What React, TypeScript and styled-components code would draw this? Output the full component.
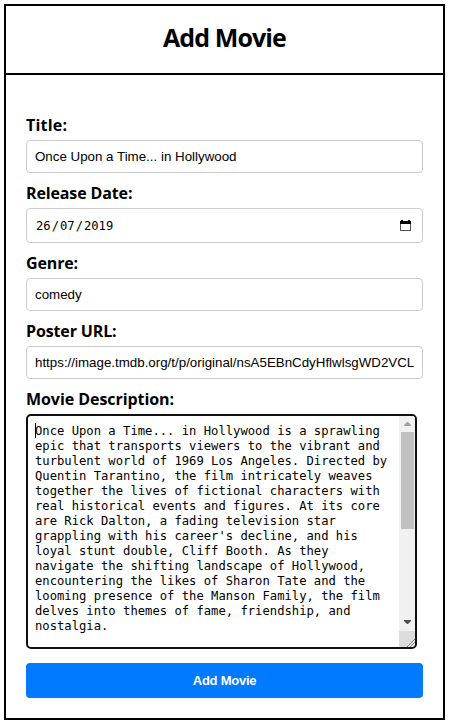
import React from "react";
import styled, { createGlobalStyle } from "styled-components";

const GlobalStyle = createGlobalStyle`
  * { box-sizing: border-box; }
  body { margin: 0; background: #fff; color: #000; }
`;

const Frame = styled.main`
  width: 441px;
  height: 716px;
  margin: 4px 0 0 4px;
  border: 2px solid #000;
`;

const Header = styled.header`
  height: 69px;
  border-bottom: 2px solid #000;
  display: flex;
  justify-content: center;
`;

const Heading = styled.h1`
  margin: 13px 0 0;
  font: 700 25px/36px "Open Sans", sans-serif;
  letter-spacing: -0.9px;
  white-space: nowrap;
`;

const Form = styled.form`
  display: flex;
  flex-direction: column;
  padding: 40px 20px 0;
`;

const Field = styled.div<{ $gap?: number }>`
  display: flex;
  flex-direction: column;
  margin-bottom: ${(p) => p.$gap ?? 10}px;
`;

const Label = styled.label<{ $tracking?: number }>`
  height: 25px;
  font: 700 16px/21px "Open Sans", sans-serif;
  letter-spacing: ${(p) => p.$tracking ?? -0.13}px;
  white-space: nowrap;
`;

const TextInput = styled.input`
  width: 100%;
  height: 33px;
  padding: 8px;
  border: 1px solid #ccc;
  border-radius: 4px;
  outline: none;
  font: 13.333px/15px "Liberation Sans", Arial, sans-serif;
  color: #000;
`;

const DateBox = styled.div`
  display: flex;
  align-items: center;
  justify-content: space-between;
  height: 35px;
  padding: 0 11px 0 8px;
  border: 1px solid #ccc;
  border-radius: 4px;
  font: 12.18px/15px "DejaVu Sans Mono", monospace;
`;

const DateParts = styled.div`
  display: flex;
  padding-top: 2px;
  span { padding: 0 1px; }
`;

const Editor = styled.div`
  display: flex;
  justify-content: space-between;
  width: 391px;
  height: 235px;
  border: 2px solid #101010;
  border-radius: 5px;
  overflow: hidden;
`;

const Description = styled.div`
  position: relative;
  padding: 8px 0 0 7px;
  font: 12.19px/15px "DejaVu Sans Mono", monospace;
  white-space: pre;
`;

const Caret = styled.i`
  position: absolute;
  left: 7px;
  top: 7px;
  width: 1px;
  height: 15px;
  background: #000;
`;

const Scrollbar = styled.div`
  display: flex;
  flex-direction: column;
  width: 16px;
  background: #f1f1f1;
`;

const Thumb = styled.div`
  width: 13px;
  height: 97px;
  margin-left: 2px;
  background: #c1c1c1;
`;

const Corner = styled.div`
  height: 16px;
  background: #dcdcdc;
`;

const Spacer = styled.div`
  flex: 1;
`;

const Glyph = styled.svg`
  display: block;
  flex: none;
`;

const Submit = styled.button`
  height: 35px;
  padding: 0;
  border: 0;
  border-radius: 4px;
  background: #007bff;
  color: #fff;
  font: bold 13px/15px "Liberation Sans", Arial, sans-serif;
  letter-spacing: -0.25px;
`;

const description = [
  "Once Upon a Time... in Hollywood is a sprawling",
  "epic that transports viewers to the vibrant and",
  "turbulent world of 1969 Los Angeles. Directed by",
  "Quentin Tarantino, the film intricately weaves",
  "together the lives of fictional characters with",
  "real historical events and figures. At its core",
  "are Rick Dalton, a fading television star",
  "grappling with his career's decline, and his",
  "loyal stunt double, Cliff Booth. As they",
  "navigate the shifting landscape of Hollywood,",
  "encountering the likes of Sharon Tate and the",
  "looming presence of the Manson Family, the film",
  "delves into themes of fame, friendship, and",
  "nostalgia.",
].join("\n");

const CalendarIcon = () => (
  <Glyph width="11" height="12" viewBox="0 0 11 12" shapeRendering="crispEdges">
    <path d="M0 1h11v3H0zM1 0h2v1H1zM8 0h2v1H8z" fill="#000" />
    <path d="M.5 3.5v7h10v-7" fill="none" stroke="#555" />
  </Glyph>
);

const Arrow = ({ down = false }: { down?: boolean }) => (
  <Glyph width="16" height="16" viewBox="0 0 16 16">
    {down ? (
      <path d="M5 5h7v1l-3 3h-1l-3-3z" fill="#505050" />
    ) : (
      <path d="M5 10v-1l3-3h1l3 3v1z" fill="#a3a3a3" />
    )}
  </Glyph>
);

const ResizeGrip = () => (
  <Glyph width="16" height="16" viewBox="0 0 16 16">
    <path d="M8 16l8-8M11 16l5-5M14 16l2-2" stroke="#555" strokeWidth=".8" />
    <path d="M9 16l7-7M12 16l4-4" stroke="#fff" strokeWidth=".9" />
  </Glyph>
);

export default function App() {
  return (
    <>
      <GlobalStyle />
      <Frame>
        <Header>
          <Heading>Add Movie</Heading>
        </Header>
        <Form>
          <Field>
            <Label $tracking={0.2}>Title:</Label>
            <TextInput readOnly value="Once Upon a Time... in Hollywood" />
          </Field>
          <Field>
            <Label>Release Date:</Label>
            <DateBox>
              <DateParts>
                <span>26</span>/<span>07</span>/<span>2019</span>
              </DateParts>
              <CalendarIcon />
            </DateBox>
          </Field>
          <Field>
            <Label>Genre:</Label>
            <TextInput readOnly value="comedy" />
          </Field>
          <Field>
            <Label>Poster URL:</Label>
            <TextInput
              readOnly
              value="https://image.tmdb.org/t/p/original/nsA5EBnCdyHflwlsgWD2VCL"
            />
          </Field>
          <Field $gap={14}>
            <Label $tracking={-0.06}>Movie Description:</Label>
            <Editor>
              <Description>
                {description}
                <Caret />
              </Description>
              <Scrollbar>
                <Arrow />
                <Thumb />
                <Spacer />
                <Arrow down />
                <Corner>
                  <ResizeGrip />
                </Corner>
              </Scrollbar>
            </Editor>
          </Field>
          <Submit type="button">Add Movie</Submit>
        </Form>
      </Frame>
    </>
  );
}
